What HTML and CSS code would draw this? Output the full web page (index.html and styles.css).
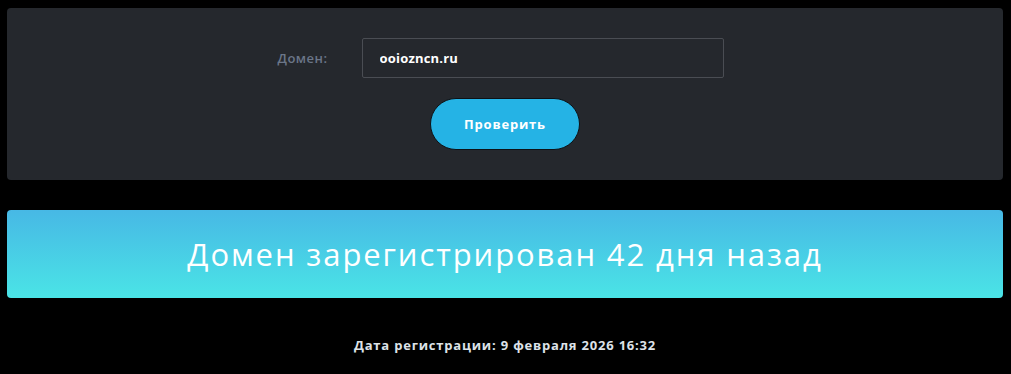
FILE: index.html
```html
<!DOCTYPE html>
<html lang="ru">
<head>
    <meta charset="UTF-8">
    <meta name="viewport" content="width=device-width, initial-scale=1.0">
    <title>Проверка домена</title>
    <link rel="stylesheet" href="styles.css">
</head>
<body>
    <section class="check">
        <form class="check-form">
            <div class="field">
                <label class="field-label" for="domain">Домен:</label>
                <input class="field-input" id="domain" type="text" value="ooiozncn.ru">
            </div>
            <button class="check-btn" type="button">Проверить</button>
        </form>
    </section>
    <div class="result">Домен зарегистрирован 42 дня назад</div>
    <p class="reg-date">Дата регистрации: 9 февраля 2026 16:32</p>
</body>
</html>
```

FILE: styles.css
```css
body{
    margin: 0px;
    padding: 8px 8px 0px 7px;
    background: #000;
    font-family: "Open Sans", "DejaVu Sans", sans-serif;
    color: #fff;
}
.check{
    background: #25282d;
    border-radius: 4px;
    height: 172px;
    box-sizing: border-box;
    padding-top: 30px;
}
.check-form{
    display: flex;
    flex-direction: column;
    align-items: center;
}
.field{
    display: flex;
    align-items: center;
    margin-left: -9px;
}
.field-label{
    width: 84px;
    color: #6b7688;
    font-size: 13px;
    font-weight: 600;
    letter-spacing: 0.5px;
}
.field-input{
    width: 362px;
    height: 40px;
    box-sizing: border-box;
    background: #25282d;
    border: 1px solid #4a4d53;
    border-radius: 2px;
    padding: 0px 17px;
    color: #fff;
    font-family: inherit;
    font-size: 13px;
    font-weight: 700;
    letter-spacing: 0.2px;
    outline: none;
}
.check-btn{
    margin-top: 20px;
    width: 150px;
    height: 52px;
    border-radius: 26px;
    border: 1px solid #0d1216;
    background: #25b3e5;
    color: #fff;
    font-family: inherit;
    font-size: 13px;
    font-weight: 700;
    letter-spacing: 0.8px;
}
.result{
    margin-top: 30px;
    height: 88px;
    border-radius: 4px;
    background: linear-gradient(#47b8e5, #4ae4e6);
    display: flex;
    align-items: center;
    justify-content: center;
    font-size: 31px;
    font-weight: 400;
    letter-spacing: 1.9px;
    color: #fff;
}
.reg-date{
    margin: 38px 0px 0px 0px;
    text-align: center;
    color: #dde2e8;
    font-size: 13px;
    font-weight: 700;
    letter-spacing: 0.8px;
}
```
